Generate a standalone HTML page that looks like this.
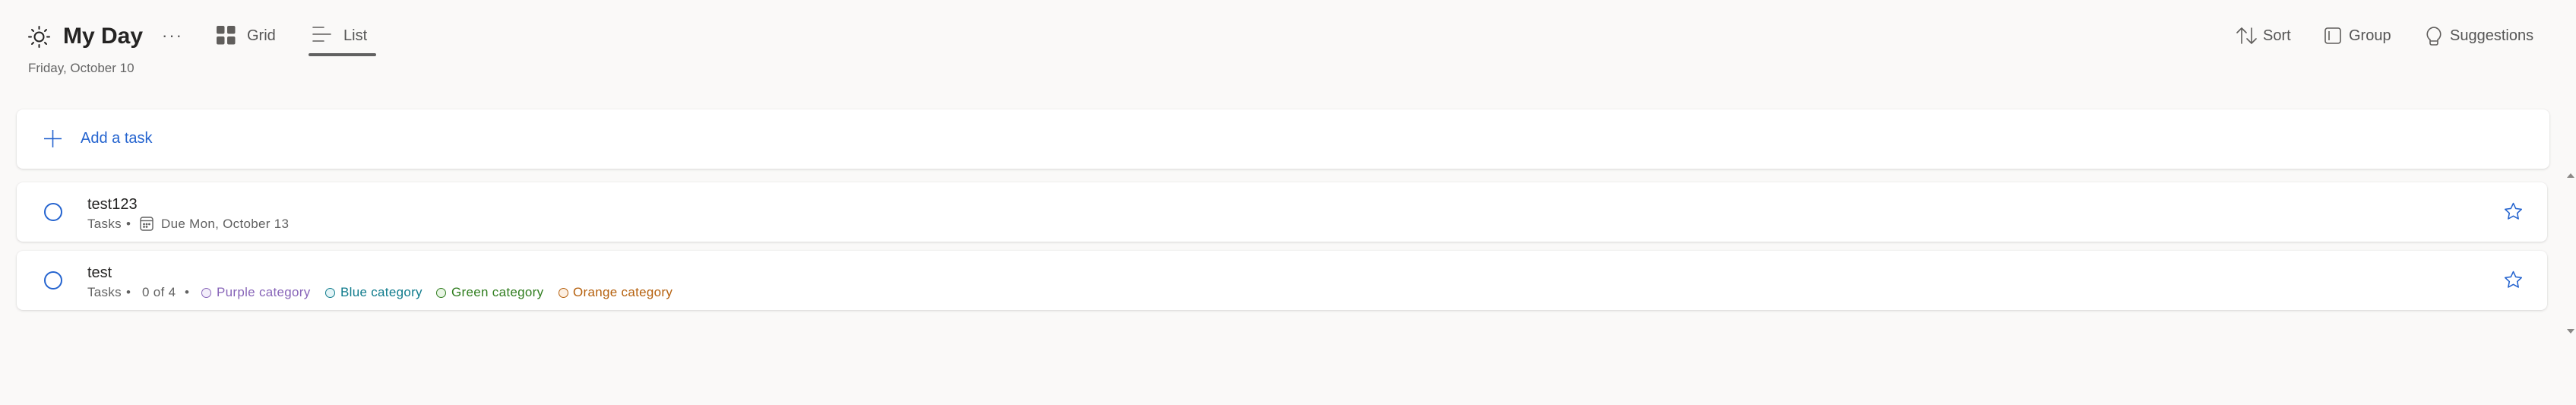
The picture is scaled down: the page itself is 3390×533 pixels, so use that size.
<!DOCTYPE html>
<html><head><meta charset="utf-8"><style>
*{margin:0;padding:0;box-sizing:border-box}
body{width:3390px;height:533px;background:#faf9f8;font-family:"Liberation Sans",sans-serif;position:relative;overflow:hidden;color:#252423}
.a{position:absolute;white-space:nowrap}
.card{position:absolute;left:22px;background:#fff;border-radius:8px;box-shadow:0 1px 3px rgba(0,0,0,.13),0 0 1px rgba(0,0,0,.1)}
.hd{font-size:20px;color:#555;line-height:24px}
.meta{position:absolute;white-space:nowrap;font-size:17px;color:#616161;line-height:20px;letter-spacing:.3px}
.cc{position:absolute;width:13px;height:13px;border-radius:50%;border:1.5px solid}
</style></head><body>
<svg class="a" style="left:36px;top:33px" width="31" height="31" viewBox="0 0 31 31" fill="none" stroke="#252423" stroke-width="2" stroke-linecap="round"><circle cx="15.5" cy="15.5" r="6"/><path d="M15.5 2v3M15.5 26v3M2 15.5h3M26 15.5h3M6 6l2 2M23 23l2 2M25 6l-2 2M8 23l-2 2"/></svg>
<div class="a" style="left:83px;top:30px;font-size:30px;font-weight:bold;line-height:36px;color:#252423">My Day</div>
<div class="a" style="left:213px;top:34px;font-size:22px;color:#555;letter-spacing:2px">···</div>
<svg class="a" style="left:285px;top:34px" width="25" height="25" viewBox="0 0 25 25" fill="#605e5c"><rect x="0" y="0" width="10.5" height="10.5" rx="2"/><rect x="14" y="0" width="10.5" height="10.5" rx="2"/><rect x="0" y="14" width="10.5" height="10.5" rx="2"/><rect x="14" y="14" width="10.5" height="10.5" rx="2"/></svg>
<div class="a hd" style="left:325px;top:35px">Grid</div>
<svg class="a" style="left:411px;top:34px" width="25" height="22" viewBox="0 0 25 22" stroke="#605e5c" stroke-width="1.6" stroke-linecap="round"><path d="M1 2h14M1 11h23M1 20h14"/></svg>
<div class="a hd" style="left:452px;top:35px">List</div>
<div class="a" style="left:406px;top:70px;width:89px;height:4px;border-radius:2px;background:#616161"></div>
<div class="a" style="left:37px;top:80px;font-size:17px;color:#666;line-height:20px">Friday, October 10</div>

<svg class="a" style="left:2943px;top:35px" width="28" height="24" viewBox="0 0 28 24" fill="none" stroke="#605e5c" stroke-width="1.6" stroke-linecap="round" stroke-linejoin="round"><path d="M7 22V2M1 8l6-6 6 6M20 2v20M14 16l6 6 6-6"/></svg>
<div class="a hd" style="left:2978px;top:35px">Sort</div>
<svg class="a" style="left:3059px;top:36px" width="22" height="22" viewBox="0 0 22 22" fill="none" stroke="#605e5c" stroke-width="1.6"><rect x="1" y="1" width="20" height="20" rx="3"/><path d="M6 5v12"/></svg>
<div class="a hd" style="left:3091px;top:35px">Group</div>
<svg class="a" style="left:3193px;top:35px" width="20" height="26" viewBox="0 0 20 26" fill="none" stroke="#605e5c" stroke-width="1.6"><path d="M10 1a9 9 0 0 0-5 16.3V22a2 2 0 0 0 2 2h6a2 2 0 0 0 2-2v-4.7A9 9 0 0 0 10 1zM5 19h10"/></svg>
<div class="a hd" style="left:3224px;top:35px">Suggestions</div>

<div class="card" style="top:144px;width:3333px;height:78px"></div>
<svg class="a" style="left:58px;top:171px" width="23" height="23" viewBox="0 0 23 23" stroke="#2564cf" stroke-width="1.6"><path d="M11.5 0v23M0 11.5h23"/></svg>
<div class="a" style="left:106px;top:170px;font-size:20px;color:#2564cf;line-height:24px">Add a task</div>

<div class="card" style="top:240px;width:3330px;height:78px"></div>
<div class="a" style="left:58px;top:267px;width:24px;height:24px;border:2px solid #2564cf;border-radius:50%"></div>
<div class="a" style="left:115px;top:257px;font-size:20px;line-height:24px">test123</div>
<div class="meta" style="left:115px;top:285px">Tasks</div>
<div class="meta" style="left:166px;top:285px">•</div>
<svg class="a" style="left:184px;top:285px" width="18" height="19" viewBox="0 0 18 19" fill="none" stroke="#616161" stroke-width="1.4"><rect x="1" y="1" width="16" height="17" rx="3"/><path d="M1 5.5h16"/><circle cx="5.5" cy="10" r=".7" fill="#616161"/><circle cx="9" cy="10" r=".7" fill="#616161"/><circle cx="12.5" cy="10" r=".7" fill="#616161"/><circle cx="5.5" cy="13.5" r=".7" fill="#616161"/><circle cx="9" cy="13.5" r=".7" fill="#616161"/></svg>
<div class="meta" style="left:212px;top:285px">Due Mon, October 13</div>
<svg class="a" style="left:3295px;top:266px" width="25" height="25" viewBox="0 0 24 24" fill="none" stroke="#2564cf" stroke-width="1.5" stroke-linejoin="round"><path d="M12 1.5l3.1 6.6 7.2.9-5.3 5 1.4 7.1L12 17.6l-6.4 3.5 1.4-7.1-5.3-5 7.2-.9z"/></svg>

<div class="card" style="top:330px;width:3330px;height:78px"></div>
<div class="a" style="left:58px;top:357px;width:24px;height:24px;border:2px solid #2564cf;border-radius:50%"></div>
<div class="a" style="left:115px;top:347px;font-size:20px;line-height:24px">test</div>
<div class="meta" style="left:115px;top:375px">Tasks</div>
<div class="meta" style="left:166px;top:375px">•</div>
<div class="meta" style="left:187px;top:375px">0 of 4</div>
<div class="meta" style="left:243px;top:375px">•</div>
<div class="cc" style="left:265px;top:379px;border-color:#8764b8;background:#f3eefa"></div>
<div class="meta" style="left:285px;top:375px;color:#8764b8">Purple category</div>
<div class="cc" style="left:428px;top:379px;border-color:#0f7b8c;background:#e3f4f7"></div>
<div class="meta" style="left:448px;top:375px;color:#0f7b8c">Blue category</div>
<div class="cc" style="left:574px;top:379px;border-color:#2f7d1e;background:#e8f5e4"></div>
<div class="meta" style="left:594px;top:375px;color:#2f7d1e">Green category</div>
<div class="cc" style="left:735px;top:379px;border-color:#b5600d;background:#fcefe2"></div>
<div class="meta" style="left:754px;top:375px;color:#b5600d">Orange category</div>
<svg class="a" style="left:3295px;top:356px" width="25" height="25" viewBox="0 0 24 24" fill="none" stroke="#2564cf" stroke-width="1.5" stroke-linejoin="round"><path d="M12 1.5l3.1 6.6 7.2.9-5.3 5 1.4 7.1L12 17.6l-6.4 3.5 1.4-7.1-5.3-5 7.2-.9z"/></svg>

<svg class="a" style="left:3378px;top:227px" width="10" height="7"><path d="M0 7L5 1 10 7z" fill="#8a8886"/></svg>
<svg class="a" style="left:3378px;top:433px" width="10" height="7"><path d="M0 0L5 6 10 0z" fill="#8a8886"/></svg>
</body></html>
